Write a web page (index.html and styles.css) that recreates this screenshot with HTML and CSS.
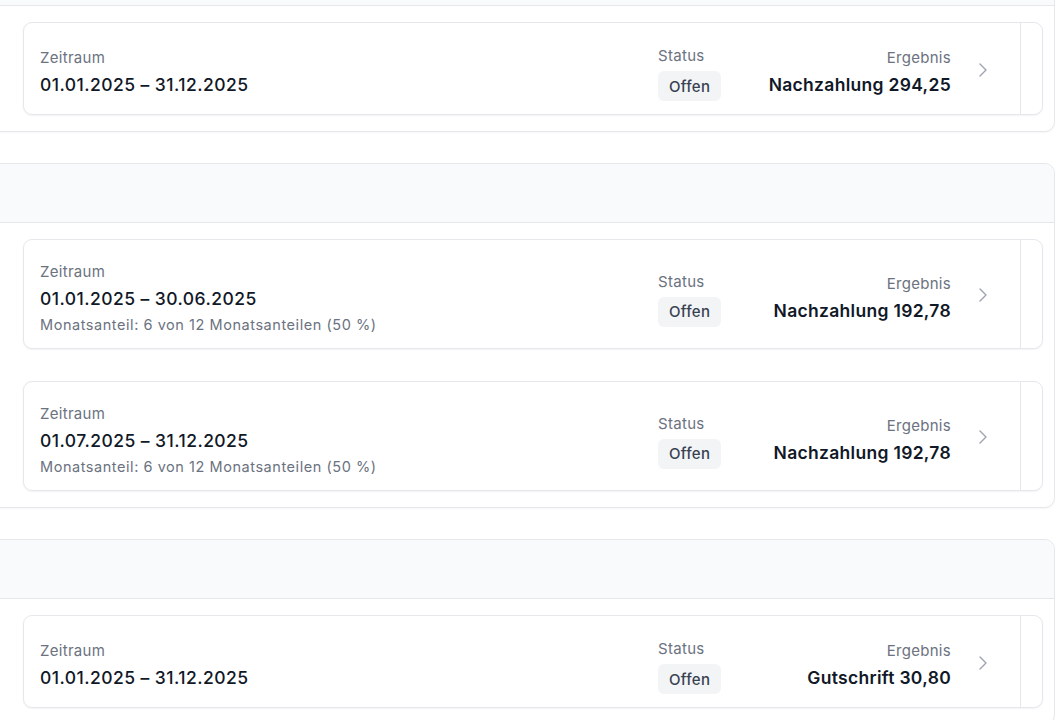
FILE: index.html
```html
<!DOCTYPE html>
<html lang="de">
<head>
<meta charset="utf-8">
<title>Abrechnungen</title>
<link rel="stylesheet" href="styles.css">
</head>
<body>
<main class="page">
  <section class="group group--first">
    <div class="group-head"></div>
    <div class="group-body">
      <article class="card">
        <div class="card-main">
          <div class="col-period">
            <div class="label">Zeitraum</div>
            <div class="period">01.01.2025 – 31.12.2025</div>
          </div>
          <div class="col-status">
            <div class="label label--status">Status</div>
            <span class="badge">Offen</span>
          </div>
          <div class="col-result">
            <div class="label">Ergebnis</div>
            <div class="result">Nachzahlung 294,25</div>
          </div>
          <svg class="chevron" viewBox="0 0 10 16" width="10" height="16"><polyline points="2,2 8,8 2,14" fill="none" stroke="currentColor" stroke-width="1.4" stroke-linecap="round" stroke-linejoin="round"/></svg>
        </div>
        <div class="card-side"></div>
      </article>
    </div>
  </section>

  <section class="group">
    <div class="group-head"></div>
    <div class="group-body">
      <article class="card">
        <div class="card-main">
          <div class="col-period">
            <div class="label">Zeitraum</div>
            <div class="period">01.01.2025 – 30.06.2025</div>
            <div class="share">Monatsanteil: 6 von 12 Monatsanteilen (50 %)</div>
          </div>
          <div class="col-status">
            <div class="label label--status">Status</div>
            <span class="badge">Offen</span>
          </div>
          <div class="col-result">
            <div class="label">Ergebnis</div>
            <div class="result">Nachzahlung 192,78</div>
          </div>
          <svg class="chevron" viewBox="0 0 10 16" width="10" height="16"><polyline points="2,2 8,8 2,14" fill="none" stroke="currentColor" stroke-width="1.4" stroke-linecap="round" stroke-linejoin="round"/></svg>
        </div>
        <div class="card-side"></div>
      </article>
      <article class="card">
        <div class="card-main">
          <div class="col-period">
            <div class="label">Zeitraum</div>
            <div class="period">01.07.2025 – 31.12.2025</div>
            <div class="share">Monatsanteil: 6 von 12 Monatsanteilen (50 %)</div>
          </div>
          <div class="col-status">
            <div class="label label--status">Status</div>
            <span class="badge">Offen</span>
          </div>
          <div class="col-result">
            <div class="label">Ergebnis</div>
            <div class="result">Nachzahlung 192,78</div>
          </div>
          <svg class="chevron" viewBox="0 0 10 16" width="10" height="16"><polyline points="2,2 8,8 2,14" fill="none" stroke="currentColor" stroke-width="1.4" stroke-linecap="round" stroke-linejoin="round"/></svg>
        </div>
        <div class="card-side"></div>
      </article>
    </div>
  </section>

  <section class="group">
    <div class="group-head"></div>
    <div class="group-body">
      <article class="card">
        <div class="card-main">
          <div class="col-period">
            <div class="label">Zeitraum</div>
            <div class="period">01.01.2025 – 31.12.2025</div>
          </div>
          <div class="col-status">
            <div class="label label--status">Status</div>
            <span class="badge">Offen</span>
          </div>
          <div class="col-result">
            <div class="label">Ergebnis</div>
            <div class="result">Gutschrift 30,80</div>
          </div>
          <svg class="chevron" viewBox="0 0 10 16" width="10" height="16"><polyline points="2,2 8,8 2,14" fill="none" stroke="currentColor" stroke-width="1.4" stroke-linecap="round" stroke-linejoin="round"/></svg>
        </div>
        <div class="card-side"></div>
      </article>
    </div>
  </section>
</main>
</body>
</html>
```

FILE: styles.css
```css
* { box-sizing: border-box; }

html, body {
  margin: 0;
  padding: 0;
  background: #ffffff;
  overflow: hidden;
}

body {
  font-family: Inter, "Noto Sans", "Liberation Sans", sans-serif;
  color: #111827;
  -webkit-font-smoothing: antialiased;
}

.page {
  display: flex;
  flex-direction: column;
  gap: 31px;
  margin-left: -10px;
  width: calc(100% + 10px);
}

.group {
  border: 1px solid #e5e7eb;
  border-radius: 10px;
  background: #ffffff;
  overflow: hidden;
  box-shadow: 0 1px 2px rgba(15, 23, 42, 0.04);
}

.group--first {
  margin-top: -54px;
}

.group-head {
  height: 59px;
  background: #f8fafc;
  border-bottom: 1px solid #e5e7eb;
}

.group-body {
  display: flex;
  flex-direction: column;
  gap: 32px;
  padding: 16px 11px 16px 32px;
}

.card {
  display: flex;
  border: 1px solid #e5e7eb;
  border-radius: 9px;
  background: #ffffff;
  box-shadow: 0 1px 2px rgba(15, 23, 42, 0.05);
}

.card-main {
  flex: 1;
  display: grid;
  grid-template-columns: 1fr 110px 183px 37px;
  align-items: center;
  padding: 22px 32px 13px 16px;
}

.card-side {
  width: 22px;
  border-left: 1px solid #e5e7eb;
}

.label {
  font-size: 15px;
  line-height: 20px;
  letter-spacing: 0.3px;
  color: #6b7280;
  margin-bottom: 4px;
}

.label--status {
  margin-bottom: 5px;
  line-height: 21px;
}

.period {
  font-size: 17.5px;
  line-height: 26px;
  letter-spacing: 0.45px;
  font-weight: 500;
  color: #111827;
}

.share {
  margin-top: 3px;
  font-size: 14.5px;
  line-height: 20px;
  letter-spacing: 0.55px;
  color: #6b7280;
}

.col-status {
  display: flex;
  flex-direction: column;
  align-items: flex-start;
}

.badge {
  display: inline-flex;
  align-items: center;
  height: 30px;
  padding: 0 11px;
  border-radius: 6px;
  background: #f3f4f6;
  color: #374151;
  font-size: 15px;
  letter-spacing: 0.3px;
  font-weight: 500;
}

.col-result {
  text-align: right;
}

.result {
  font-size: 17.5px;
  line-height: 26px;
  letter-spacing: 0.3px;
  font-weight: 600;
  color: #111827;
  white-space: nowrap;
}

.chevron {
  margin-bottom: 7px;
  color: #9ca3af;
  justify-self: end;
}
```
